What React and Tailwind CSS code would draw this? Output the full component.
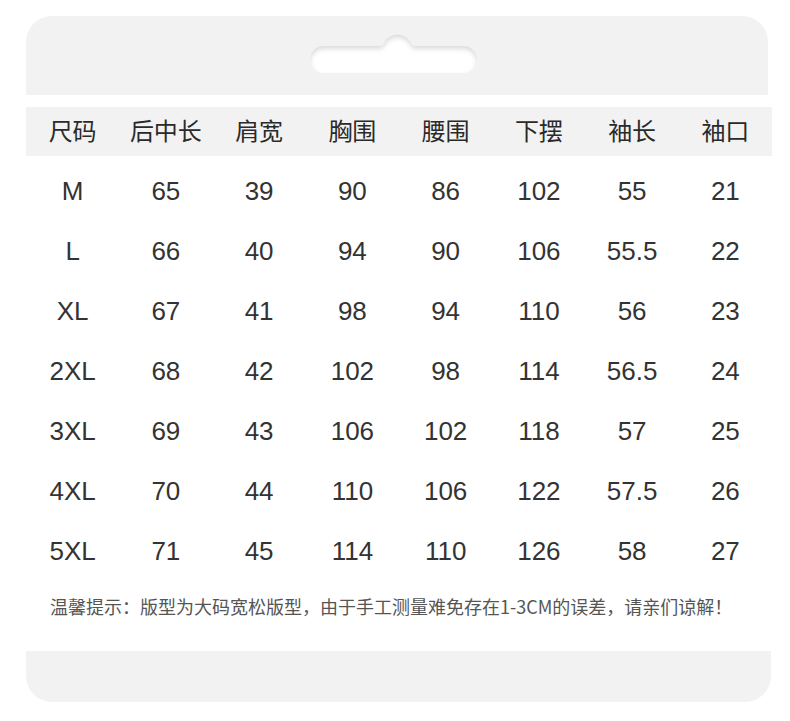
const HEADERS = ["尺码", "后中长", "肩宽", "胸围", "腰围", "下摆", "袖长", "袖口"];

const ROWS = [
    ["M", 65, 39, 90, 86, 102, 55, 21],
    ["L", 66, 40, 94, 90, 106, "55.5", 22],
    ["XL", 67, 41, 98, 94, 110, 56, 23],
    ["2XL", 68, 42, 102, 98, 114, "56.5", 24],
    ["3XL", 69, 43, 106, 102, 118, 57, 25],
    ["4XL", 70, 44, 110, 106, 122, "57.5", 26],
    ["5XL", 71, 45, 114, 110, 126, 58, 27],
];

const CJK = "font-['Noto_Sans_CJK_SC','Noto_Sans',sans-serif]";

function HangerSlot() {
    return (
        <svg width="168" height="42" viewBox="0 0 168 42">
            <defs>
                <filter id="inset" x="-10%" y="-30%" width="120%" height="160%">
                    <feOffset dy="3"/>
                    <feGaussianBlur stdDeviation="2.4" result="blur"/>
                    <feComposite operator="out" in="SourceGraphic" in2="blur" result="inverse"/>
                    <feFlood floodColor="#000" floodOpacity="0.3" result="color"/>
                    <feComposite operator="in" in="color" in2="inverse" result="shadow"/>
                    <feComposite operator="over" in="shadow" in2="SourceGraphic"/>
                </filter>
            </defs>
            <path
                d="M13.5 13 H70 Q72.6 13 73.5 11 A15 15 0 0 1 101.5 11 Q102.4 13 105 13 H153.5 A13.5 13.5 0 0 1 153.5 40 H13.5 A13.5 13.5 0 0 1 13.5 13 Z"
                fill="#fff"
                filter="url(#inset)"/>
        </svg>
    );
}

export default function App() {
    return (
        <div className="w-[790px] h-[721px] bg-white pt-[16px] pl-[26px]">
            <div className="w-[742px] h-[79px] bg-[#f2f2f2] rounded-t-[26px] pl-[284px] pt-[17px]">
                <HangerSlot/>
            </div>

            <div className={`mt-[12px] w-[746px] h-[49px] pb-[4px] bg-[#f2f2f2] grid grid-cols-8 items-center text-[24px] text-[#2a2a2a] ${CJK}`}>
                {HEADERS.map(h =>
                    <div key={h} className="text-center leading-none">{h}</div>)}
            </div>

            <div className="pt-[5px] w-[746px] font-['Liberation_Sans',Arial,sans-serif] text-[26px] text-[#333]">
                {ROWS.map(row =>
                    <div key={row[0]} className="grid grid-cols-8 h-[60px] items-center">
                        {row.map((cell, i) =>
                            <div key={i} className="text-center leading-none">{cell}</div>)}
                    </div>)}
            </div>

            <div className={`mt-[13px] pl-[24px] text-[18px] leading-[25px] text-[#555] ${CJK}`}>
                温馨提示：版型为大码宽松版型，由于手工测量难免存在1-3CM的误差，请亲们谅解！
            </div>

            <div className="mt-[32px] w-[745px] h-[51px] bg-[#f2f2f2] rounded-b-[26px]"/>
        </div>
    );
}
